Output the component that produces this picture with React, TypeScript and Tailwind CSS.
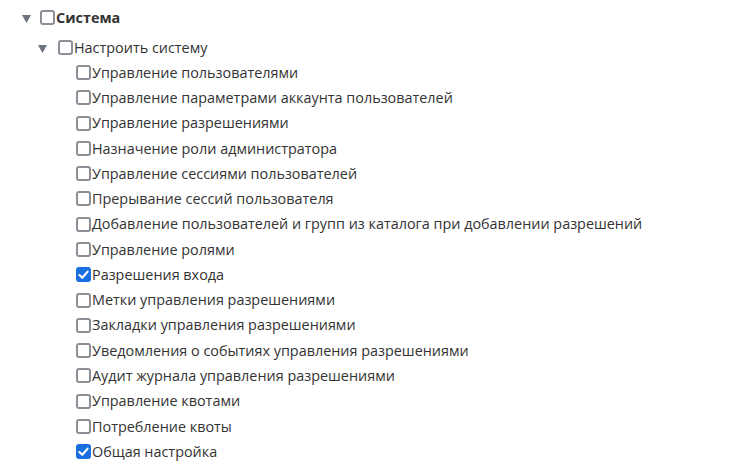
import React from 'react';

const items: { label: string; checked?: boolean }[] = [
  { label: 'Управление пользователями' },
  { label: 'Управление параметрами аккаунта пользователей' },
  { label: 'Управление разрешениями' },
  { label: 'Назначение роли администратора' },
  { label: 'Управление сессиями пользователей' },
  { label: 'Прерывание сессий пользователя' },
  { label: 'Добавление пользователей и групп из каталога при добавлении разрешений' },
  { label: 'Управление ролями' },
  { label: 'Разрешения входа', checked: true },
  { label: 'Метки управления разрешениями' },
  { label: 'Закладки управления разрешениями' },
  { label: 'Уведомления о событиях управления разрешениями' },
  { label: 'Аудит журнала управления разрешениями' },
  { label: 'Управление квотами' },
  { label: 'Потребление квоты' },
  { label: 'Общая настройка', checked: true },
];

function Toggle() {
  return (
    <svg width="9" height="8" viewBox="0 0 9 8" className="shrink-0 mt-[3px]">
      <path d="M0 0 H9 L4.5 8 Z" fill="#6e7380" />
    </svg>
  );
}

function Box({ checked }: { checked?: boolean }) {
  if (checked) {
    return (
      <span className="w-[15px] h-[15px] rounded-[3px] bg-[#1a6fe0] flex items-center justify-center shrink-0 mr-[1px]">
        <svg width="11" height="10" viewBox="0 0 11 10">
          <path d="M1.4 5 L4.3 7.8 L9.6 1.6" fill="none" stroke="#fff" strokeWidth="2.1" strokeLinecap="round" strokeLinejoin="round" />
        </svg>
      </span>
    );
  }
  return <span className="w-[15px] h-[15px] rounded-[3px] border-2 border-[#8e8e96] bg-white shrink-0 mr-[1px]" />;
}

export default function App() {
  return (
    <div
      className="w-[756px] h-[465px] bg-white text-[#333] text-[14.4px] overflow-hidden"
      style={{ fontFamily: '"Open Sans", "Noto Sans", sans-serif' }}
    >
      <div className="flex items-center h-[25px] mt-[5px] pl-[22px]">
        <Toggle />
        <span className="w-[9px] shrink-0" />
        <Box />
        <span className="font-bold">Система</span>
      </div>
      <div className="flex items-center h-[25px] mt-[5px] pl-[38px]">
        <Toggle />
        <span className="w-[11px] shrink-0" />
        <Box />
        <span>Настроить систему</span>
      </div>
      <ul className="pl-[76px]">
        {items.map((it) => (
          <li key={it.label} className="flex items-center h-[25.27px]">
            <Box checked={it.checked} />
            <span>{it.label}</span>
          </li>
        ))}
      </ul>
    </div>
  );
}
